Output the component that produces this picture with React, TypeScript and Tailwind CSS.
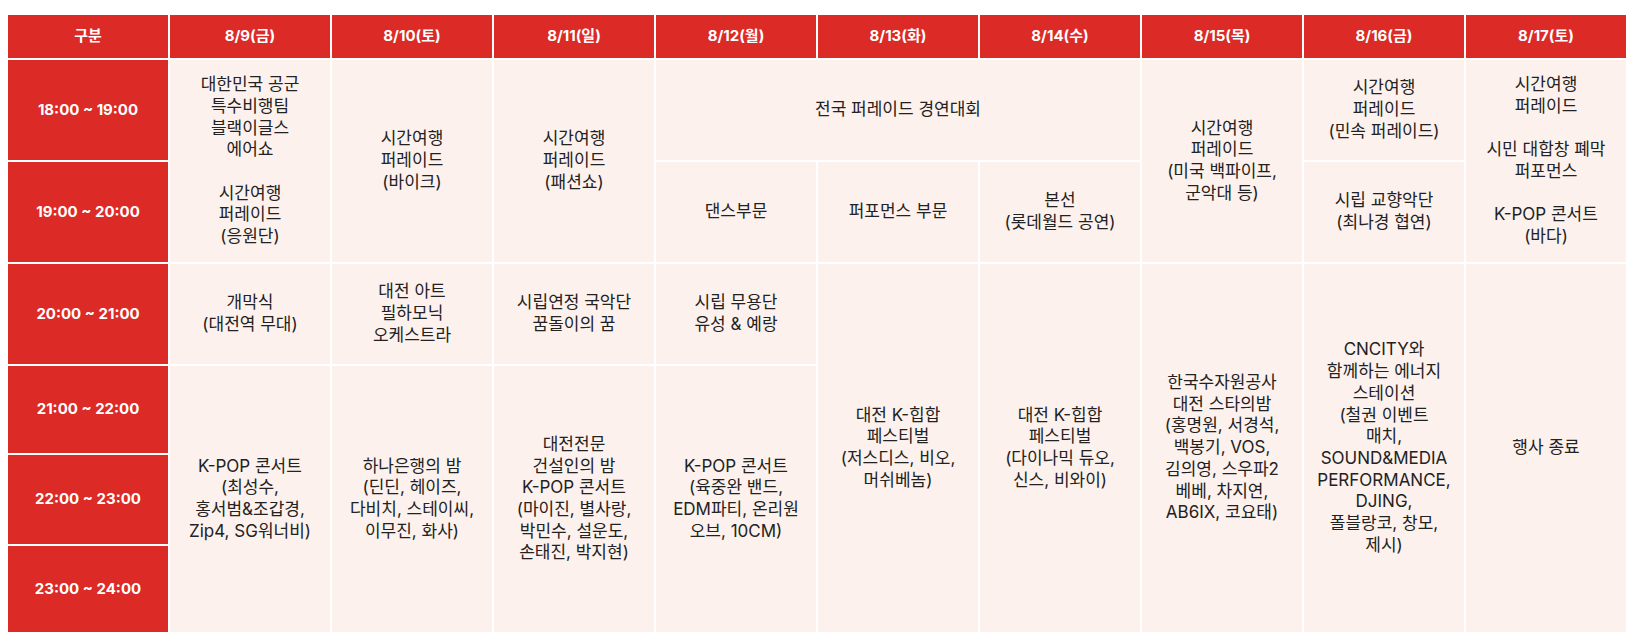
import React from "react";

type Cell = { cls: string; lines: string[] };

const headers = ["구분", "8/9(금)", "8/10(토)", "8/11(일)", "8/12(월)", "8/13(화)", "8/14(수)", "8/15(목)", "8/16(금)", "8/17(토)"];

const times: { cls: string; t: string }[] = [
  { cls: "row-start-2", t: "18:00 ~ 19:00" },
  { cls: "row-start-3", t: "19:00 ~ 20:00" },
  { cls: "row-start-4", t: "20:00 ~ 21:00" },
  { cls: "row-start-5", t: "21:00 ~ 22:00" },
  { cls: "row-start-6", t: "22:00 ~ 23:00" },
  { cls: "row-start-7", t: "23:00 ~ 24:00" },
];

const cells: Cell[] = [
  { cls: "col-start-2 row-start-2 row-span-2", lines: ["대한민국 공군", "특수비행팀", "블랙이글스", "에어쇼", "", "시간여행", "퍼레이드", "(응원단)"] },
  { cls: "col-start-2 row-start-4", lines: ["개막식", "(대전역 무대)"] },
  { cls: "col-start-2 row-start-5 row-span-3", lines: ["K-POP 콘서트", "(최성수,", "홍서범&조갑경,", "Zip4, SG워너비)"] },

  { cls: "col-start-3 row-start-2 row-span-2", lines: ["시간여행", "퍼레이드", "(바이크)"] },
  { cls: "col-start-3 row-start-4", lines: ["대전 아트", "필하모닉", "오케스트라"] },
  { cls: "col-start-3 row-start-5 row-span-3", lines: ["하나은행의 밤", "(딘딘, 헤이즈,", "다비치, 스테이씨,", "이무진, 화사)"] },

  { cls: "col-start-4 row-start-2 row-span-2", lines: ["시간여행", "퍼레이드", "(패션쇼)"] },
  { cls: "col-start-4 row-start-4", lines: ["시립연정 국악단", "꿈돌이의 꿈"] },
  { cls: "col-start-4 row-start-5 row-span-3", lines: ["대전전문", "건설인의 밤", "K-POP 콘서트", "(마이진, 별사랑,", "박민수, 설운도,", "손태진, 박지현)"] },

  { cls: "col-start-5 col-span-3 row-start-2", lines: ["전국 퍼레이드 경연대회"] },
  { cls: "col-start-5 row-start-3", lines: ["댄스부문"] },
  { cls: "col-start-5 row-start-4", lines: ["시립 무용단", "유성 & 예랑"] },
  { cls: "col-start-5 row-start-5 row-span-3", lines: ["K-POP 콘서트", "(육중완 밴드,", "EDM파티, 온리원", "오브, 10CM)"] },

  { cls: "col-start-6 row-start-3", lines: ["퍼포먼스 부문"] },
  { cls: "col-start-6 row-start-4 row-span-4", lines: ["대전 K-힙합", "페스티벌", "(저스디스, 비오,", "머쉬베놈)"] },

  { cls: "col-start-7 row-start-3", lines: ["본선", "(롯데월드 공연)"] },
  { cls: "col-start-7 row-start-4 row-span-4", lines: ["대전 K-힙합", "페스티벌", "(다이나믹 듀오,", "신스, 비와이)"] },

  { cls: "col-start-8 row-start-2 row-span-2", lines: ["시간여행", "퍼레이드", "(미국 백파이프,", "군악대 등)"] },
  { cls: "col-start-8 row-start-4 row-span-4", lines: ["한국수자원공사", "대전 스타의밤", "(홍명원, 서경석,", "백봉기, VOS,", "김의영, 스우파2", "베베, 차지연,", "AB6IX, 코요태)"] },

  { cls: "col-start-9 row-start-2", lines: ["시간여행", "퍼레이드", "(민속 퍼레이드)"] },
  { cls: "col-start-9 row-start-3", lines: ["시립 교향악단", "(최나경 협연)"] },
  { cls: "col-start-9 row-start-4 row-span-4", lines: ["CNCITY와", "함께하는 에너지", "스테이션", "(철권 이벤트", "매치,", "SOUND&MEDIA", "PERFORMANCE,", "DJING,", "폴블랑코, 창모,", "제시)"] },

  { cls: "col-start-10 row-start-2 row-span-2", lines: ["시간여행", "퍼레이드", "", "시민 대합창 폐막", "퍼포먼스", "", "K-POP 콘서트", "(바다)"] },
  { cls: "col-start-10 row-start-4 row-span-4", lines: ["행사 종료"] },
];

export default function App() {
  return (
    <div className="bg-white w-[1637px] h-[644px] pl-[8px] pt-[15px] font-['Inter','Noto_Sans_CJK_KR',sans-serif]">
      <div className="grid w-[1618px] grid-cols-[repeat(10,160px)] grid-rows-[43px_100px_100px_100px_87px_89px_86px] gap-[2px] bg-white">
        {headers.map((h, i) => (
          <div
            key={h}
            className={
              "row-start-1 flex items-center justify-center bg-[#dc2a27] text-white font-bold text-[15px] " +
              ["col-start-1", "col-start-2", "col-start-3", "col-start-4", "col-start-5", "col-start-6", "col-start-7", "col-start-8", "col-start-9", "col-start-10"][i]
            }
          >
            {h}
          </div>
        ))}
        {times.map((t) => (
          <div key={t.t} className={"col-start-1 flex items-center justify-center bg-[#dc2a27] text-white font-bold text-[15px] " + t.cls}>
            {t.t}
          </div>
        ))}
        {cells.map((c, i) => (
          <div
            key={i}
            className={"flex flex-col items-center justify-center bg-[#fcf1ed] text-center text-[#222222] text-[17px] leading-[21.7px] whitespace-nowrap " + c.cls}
          >
            {c.lines.map((l, j) => (
              <div key={j} className="min-h-[21.7px]">
                {l}
              </div>
            ))}
          </div>
        ))}
      </div>
    </div>
  );
}
